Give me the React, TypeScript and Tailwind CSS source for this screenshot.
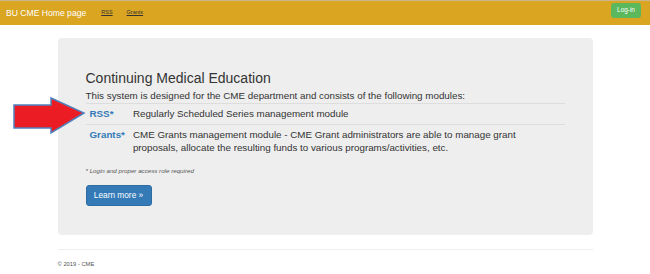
const modules = [
  {
    name: 'RSS*',
    text: 'Regularly Scheduled Series management module',
  },
  {
    name: 'Grants*',
    text: 'CME Grants management module - CME Grant administrators are able to manage grant proposals, allocate the resulting funds to various programs/activities, etc.',
  },
];

function Arrow() {
  return (
    <svg
      aria-hidden="true"
      className="pointer-events-none absolute left-0 top-0"
      width="100"
      height="140"
      viewBox="0 0 100 140"
    >
      <polygon
        points="14,105 51,105 51,98 84,113 51,133 51,128 14,128"
        fill="#ec1c24"
        stroke="#4f81bd"
        strokeWidth="1.5"
        strokeLinejoin="miter"
      />
    </svg>
  );
}

export default function App() {
  return (
    <div className="relative min-h-[274px] bg-white font-['Liberation_Sans',Arial,sans-serif] text-[#333]">
      <nav className="flex h-[25px] items-center border-t border-[#cbb58c] bg-[#daa520] pl-[6px] pr-[9px]">
        <span className="text-[8.6px] leading-none text-white">BU CME Home page</span>
        <a href="#rss" className="ml-[15px] text-[5.5px] leading-none text-[#333] underline">
          RSS
        </a>
        <a href="#grants" className="ml-[14px] text-[5.5px] leading-none text-[#333] underline">
          Grants
        </a>
        <button className="ml-auto mb-[6px] h-[15px] w-[30px] rounded-[3px] bg-[#5cb85c] text-[6.4px] leading-none text-white">
          Log-in
        </button>
      </nav>

      <main className="mx-auto w-[535px]">
        <section className="mt-[13px] h-[197px] rounded-[4px] bg-[#eeeeee] px-[28px] pt-[32px]">
          <h1 className="text-[14px] leading-[16px]">Continuing Medical Education</h1>
          <p className="mt-[3px] text-[9.8px] leading-[13px]">
            This system is designed for the CME department and consists of the following modules:
          </p>
          <table className="mt-px w-[479px] border-collapse text-[9.8px] leading-[13px]">
            <tbody>
              {modules.map((m) => (
                <tr key={m.name} className="border-t border-[#dddddd]">
                  <td className="whitespace-nowrap px-[4px] pb-[4px] pt-[3px] align-top font-bold text-[#337ab7]">
                    {m.name}
                  </td>
                  <td className="px-[4px] pb-[4px] pt-[3px] align-top">{m.text}</td>
                </tr>
              ))}
            </tbody>
          </table>
          <p className="mt-[9px] text-[6.2px] italic leading-[8px] text-[#555]">
            * Login and proper access role required
          </p>
          <button className="mt-[10px] h-[21px] w-[66px] rounded-[3px] border border-[#2e6da4] bg-[#337ab7] text-[8.3px] leading-none text-white">
            Learn more »
          </button>
        </section>

        <footer className="mt-[14px] border-t border-[#eeeeee] pt-[10px]">
          <p className="text-[5.8px] leading-[8px] text-[#555]">© 2019 - CME</p>
        </footer>
      </main>

      <Arrow />
    </div>
  );
}
